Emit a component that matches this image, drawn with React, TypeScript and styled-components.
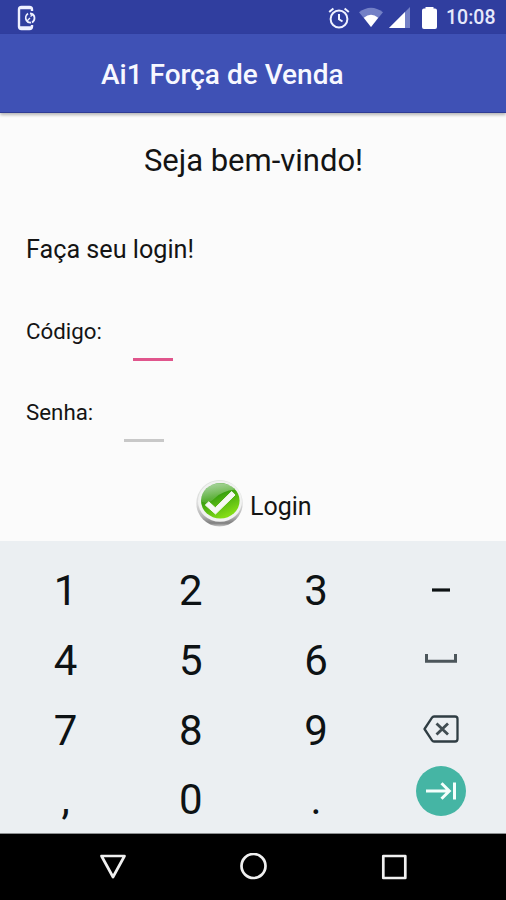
import React from "react";
import styled, { createGlobalStyle } from "styled-components";

const GlobalStyle = createGlobalStyle`
  * { box-sizing: border-box; }
  body { margin: 0; font-family: Roboto, "Noto Sans", sans-serif; background: #fbfbfb; }
`;

const Screen = styled.div`
  width: 506px;
  height: 900px;
  display: flex;
  flex-direction: column;
  overflow: hidden;
  background: #fbfbfb;
  color: #141414;
`;

const StatusBar = styled.header`
  height: 34px;
  flex: none;
  display: flex;
  align-items: center;
  justify-content: space-between;
  background: #303e9f;
  padding: 1px 10px 0 15px;
  svg { display: block; }
`;

const StatusIcons = styled.div`
  display: flex;
  align-items: center;
`;

const Clock = styled.time`
  width: 50px;
  margin-left: 9px;
  color: #e6e9fb;
  font-size: 19.5px;
  font-weight: 500;
  line-height: 34px;
  padding-top: 1px;
  white-space: nowrap;
`;

const AppBar = styled.div`
  height: 79px;
  flex: none;
  padding: 4px 0 0 101px;
  background: #3f51b5;
  border-bottom: 1px solid #2f3c94;
  box-shadow: 0 2px 3px rgba(0, 0, 0, 0.28);
  z-index: 1;
`;

const AppTitle = styled.h1`
  margin: 0;
  color: #f7f8ff;
  font-size: 28px;
  font-weight: 500;
  line-height: 74px;
  white-space: nowrap;
`;

const Main = styled.main`
  height: 428px;
  flex: none;
  display: flex;
  flex-direction: column;
`;

const Welcome = styled.h2`
  margin: 0;
  height: 96px;
  padding-left: 1px;
  text-align: center;
  font-size: 31px;
  font-weight: 400;
  line-height: 96px;
`;

const Prompt = styled.p`
  margin: 20px 0 0 26px;
  font-size: 25.2px;
  line-height: 41px;
`;

const Fields = styled.div`
  height: 162px;
  margin-top: 47px;
`;

const Field = styled.label`
  height: 81px;
  display: flex;
  align-items: flex-start;
  gap: 31px;
  padding-left: 26px;
  font-size: 22.3px;
  line-height: 28px;
`;

const FieldName = styled.span<{ $width: number }>`
  width: ${(p) => p.$width}px;
  white-space: nowrap;
`;

const Input = styled.input<{ $active?: boolean }>`
  width: 40px;
  height: 44px;
  padding: 0;
  border: 0;
  outline: 0;
  border-bottom: 3px solid ${(p) => (p.$active ? "#e0558c" : "#c8c8c8")};
  background: transparent;
  font: inherit;
`;

const LoginButton = styled.button`
  align-self: flex-start;
  display: flex;
  align-items: flex-start;
  gap: 6px;
  margin: 0 0 0 194px;
  padding: 0;
  border: 0;
  background: none;
  color: inherit;
  font: 400 25px/56px Roboto, "Noto Sans", sans-serif;
  svg { display: block; }
`;

const Keyboard = styled.section`
  height: 293px;
  flex: none;
  display: grid;
  grid-template-columns: repeat(4, 125.2px);
  grid-template-rows: repeat(4, 69.7px);
  padding: 15px 2px 0 3px;
  overflow: hidden;
  background: #ebeff2;
  border-bottom: 1px solid #8d9092;
`;

const Key = styled.button<{ $raise?: number }>`
  display: flex;
  align-items: center;
  justify-content: center;
  padding: 0 0 ${(p) => p.$raise ?? 0}px;
  border: 0;
  background: none;
  color: #0d1214;
  font: 400 42px/69px Roboto, "Noto Sans", sans-serif;
`;

const NextCircle = styled.span`
  width: 50px;
  height: 50px;
  flex: none;
  display: flex;
  align-items: center;
  justify-content: center;
  border-radius: 50%;
  background: #45b5a4;
`;

const NavBar = styled.nav`
  flex: 1;
  display: flex;
  align-items: center;
  justify-content: space-between;
  padding: 0 98px 0 98px;
  background: #000;
`;

const Gap = styled.span<{ $w: number }>`
  width: ${(p) => p.$w}px;
`;

const SyncPhone = () => (
  <svg width="24" height="26" viewBox="0 0 24 26" fill="none" stroke="#eef0ff">
    <path d="M17 6V4.500Q17 2 14.500 2H6.500Q4 2 4 4.500V21.500Q4 24 6.500 24H14.500Q17 24 17 21.500V20" strokeWidth="2.400" />
    <path d="M5 2.800H16M5 22.800H16" strokeWidth="3" />
    <path d="M13 8.500A5.300 5.300 0 0 0 11.500 15.500Q13 18 16 17.500M15 8.500Q19.500 9 19.500 13Q19.500 16 17 17.500" strokeWidth="1.800" />
    <path d="M12 16L15 13M15.500 11.500L18.500 9" strokeWidth="1.400" />
  </svg>
);

const Alarm = () => (
  <svg width="22" height="22" viewBox="0 0 22 22" fill="none" stroke="#f0f2ff" strokeWidth="2">
    <circle cx="11" cy="12" r="8.400" />
    <path d="M11 7V12.300L14.500 14.500M1.200 5L5.400 1.500M20.800 5L16.600 1.500" />
  </svg>
);

const Wifi = () => (
  <svg width="26" height="21" viewBox="0 0 26 21">
    <path d="M1 5.200Q13-3.800 25 5.200L13 20Z" fill="#7380c6" />
    <path d="M5.800 10.700Q13 4.800 20.200 10.700L13 20Z" fill="#fff" />
  </svg>
);

const Signal = () => (
  <svg width="22" height="21" viewBox="0 0 22 21">
    <path d="M0 21L21 0V21Z" fill="#7380c6" />
    <path d="M0 21L16 5V21Z" fill="#fff" />
  </svg>
);

const Battery = () => (
  <svg width="15" height="22" viewBox="0 0 15 22" fill="#fff">
    <path d="M3.500 0H11.500V1.500H13Q15 1.500 15 3.500V20Q15 22 13 22H2Q0 22 0 20V3.500Q0 1.500 2 1.500H3.500Z" />
  </svg>
);

const CheckBadge = () => (
  <svg width="50" height="50" viewBox="0 0 50 50">
    <defs>
      <linearGradient id="rim" x1="0" y1="0" x2="0" y2="1">
        <stop offset="0" stopColor="#dfe4df" />
        <stop offset="0.5" stopColor="#dedede" />
        <stop offset="0.78" stopColor="#b4b4b4" />
        <stop offset="0.93" stopColor="#808080" />
        <stop offset="1" stopColor="#c8c8c8" />
      </linearGradient>
      <linearGradient id="face" x1="0" y1="0" x2="0.5" y2="1">
        <stop offset="0" stopColor="#6db562" />
        <stop offset="0.45" stopColor="#39a00f" />
        <stop offset="1" stopColor="#83dc16" />
      </linearGradient>
      <linearGradient id="shine" x1="0" y1="0" x2="0" y2="1">
        <stop offset="0" stopColor="#fff" stopOpacity="0.45" />
        <stop offset="1" stopColor="#fff" stopOpacity="0.12" />
      </linearGradient>
    </defs>
    <circle cx="25.500" cy="24.200" r="23.200" fill="url(#rim)" />
    <ellipse cx="26" cy="22.300" rx="22" ry="20.500" fill="#f1f2f1" />
    <ellipse cx="26.300" cy="21.800" rx="19.300" ry="17.700" fill="url(#face)" />
    <path d="M7 22.500A19.300 17.700 0 0 1 41 10.500Q28 12 21 19T7 22.500Z" fill="url(#shine)" />
    <path d="M11.300 26L14.800 22.800L21.300 28.800L37.700 12.500L41 16L21.500 35Z" fill="#f6f8f4" stroke="#f6f8f4" strokeLinejoin="round" />
  </svg>
);

const Minus = () => (
  <svg width="18" height="4" viewBox="0 0 18 4">
    <path d="M0 2H18" stroke="#0d1214" strokeWidth="3.200" />
  </svg>
);

const Space = () => (
  <svg width="32" height="9" viewBox="0 0 32 9" fill="none">
    <path d="M1.500 0V7.200H30.500V0" stroke="#4c565b" strokeWidth="3" />
  </svg>
);

const Backspace = () => (
  <svg width="36" height="28" viewBox="0 0 36 28" fill="none" stroke="#2f3d43" strokeWidth="2.300" strokeLinejoin="round">
    <path d="M11 1.500H32Q34.500 1.500 34.500 4V24Q34.500 26.500 32 26.500H11Q9.800 26.500 9 25.300L1.500 14L9 2.700Q9.800 1.500 11 1.500Z" />
    <path d="M13.500 8.500L25 19.500M25 8.500L13.500 19.500" stroke="#414d52" strokeWidth="2.800" />
  </svg>
);

const TabArrow = () => (
  <svg width="32" height="20" viewBox="0 0 32 20" fill="none" stroke="#f5fffc" strokeWidth="3">
    <path d="M1 10H24M16.500 2.200L24.300 10L16.500 17.800M29.500 1.500V18.500" />
  </svg>
);

const NavIcon = ({ d }: { d: string }) => (
  <svg width="28" height="28" viewBox="0 0 28 28" fill="none" stroke="#f0f0f0" strokeWidth="2.700" strokeLinejoin="round">
    <path d={d} />
  </svg>
);

export default function App() {
  return (
    <>
      <GlobalStyle />
      <Screen>
        <StatusBar>
          <SyncPhone />
          <StatusIcons>
            <Alarm />
            <Gap $w={8} />
            <Wifi />
            <Gap $w={5} />
            <Signal />
            <Gap $w={11} />
            <Battery />
            <Clock>10:08</Clock>
          </StatusIcons>
        </StatusBar>
        <AppBar>
          <AppTitle>Ai1 Força de Venda</AppTitle>
        </AppBar>
        <Main>
          <Welcome>Seja bem-vindo!</Welcome>
          <Prompt>Faça seu login!</Prompt>
          <Fields>
            <Field>
              <FieldName $width={76}>Código:</FieldName>
              <Input $active />
            </Field>
            <Field>
              <FieldName $width={67}>Senha:</FieldName>
              <Input type="password" />
            </Field>
          </Fields>
          <LoginButton>
            <CheckBadge />
            Login
          </LoginButton>
        </Main>
        <Keyboard>
          <Key>1</Key>
          <Key>2</Key>
          <Key>3</Key>
          <Key $raise={2}><Minus /></Key>
          <Key>4</Key>
          <Key>5</Key>
          <Key>6</Key>
          <Key $raise={4}><Space /></Key>
          <Key>7</Key>
          <Key>8</Key>
          <Key>9</Key>
          <Key $raise={2}><Backspace /></Key>
          <Key>,</Key>
          <Key>0</Key>
          <Key>.</Key>
          <Key $raise={18}>
            <NextCircle><TabArrow /></NextCircle>
          </Key>
        </Keyboard>
        <NavBar>
          <NavIcon d="M3.500 3H26.500L15 24Z" />
          <NavIcon d="M2.500 13A12 12 0 1 1 26.500 13A12 12 0 1 1 2.500 13Z" />
          <NavIcon d="M3.300 3H25.300V25H3.300Z" />
        </NavBar>
      </Screen>
    </>
  );
}
